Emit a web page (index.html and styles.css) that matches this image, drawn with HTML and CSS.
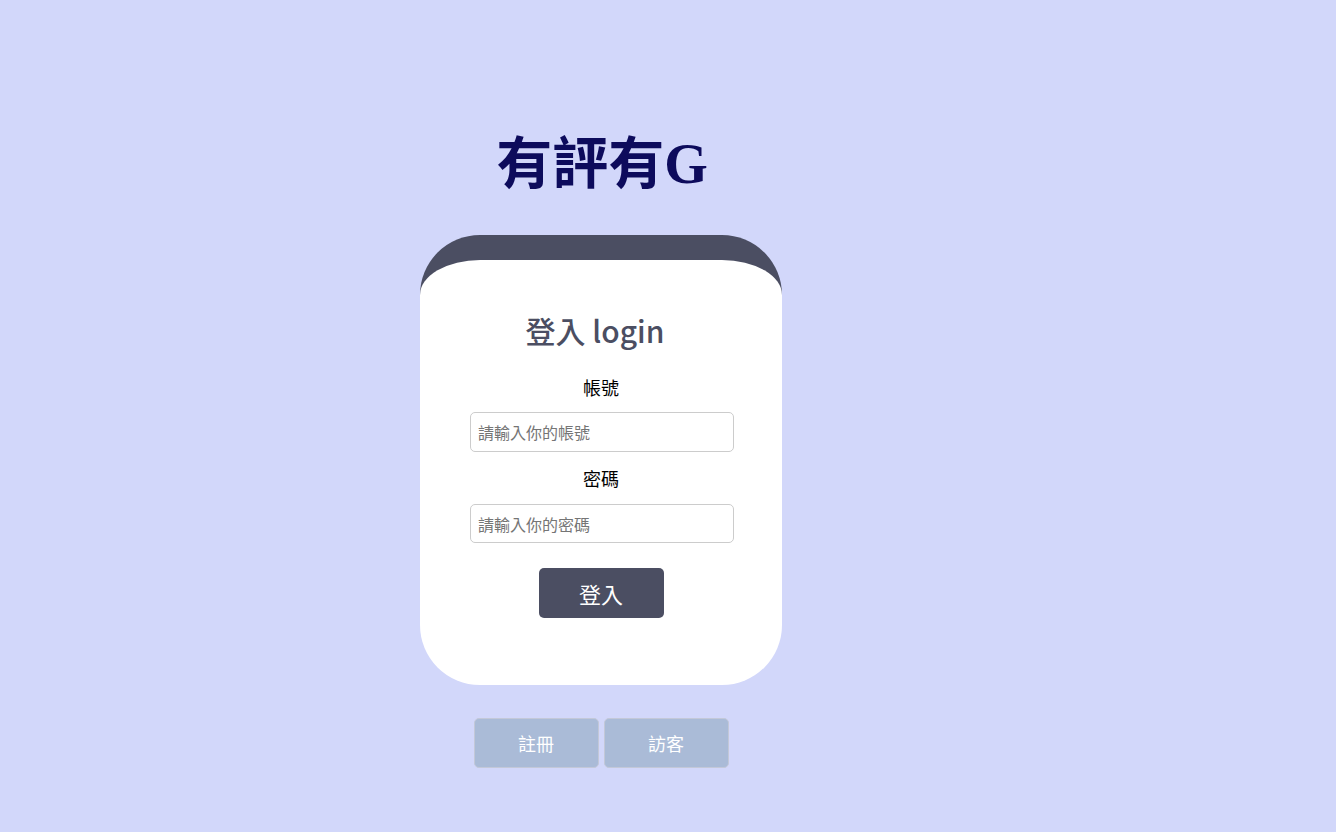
FILE: index.html
```html
<!DOCTYPE html>
<html lang="zh-Hant">
<head>
<meta charset="utf-8">
<title>有評有G</title>
<link rel="stylesheet" href="styles.css">
</head>
<body>
<div class="page">
  <h1 class="title">有評有G</h1>
  <div class="card">
    <h2 class="card-title">登入 login</h2>
    <label class="label" for="acc">帳號</label>
    <input class="field" id="acc" type="text" placeholder="請輸入你的帳號">
    <label class="label label-2" for="pwd">密碼</label>
    <input class="field" id="pwd" type="password" placeholder="請輸入你的密碼">
    <button class="login-btn" type="button">登入</button>
  </div>
  <div class="links">
    <button class="link-btn" type="button">註冊</button>
    <button class="link-btn" type="button">訪客</button>
  </div>
</div>
</body>
</html>
```

FILE: styles.css
```css
html, body {
  margin: 0;
  padding: 0;
}
body {
  background: #d2d7fa;
  min-height: 832px;
  font-family: "Noto Sans CJK TC", "Noto Sans", sans-serif;
}
.page {
  width: 362px;
  margin-left: 420px;
  padding-top: 132px;
  display: flex;
  flex-direction: column;
  align-items: center;
}
.title {
  margin: 0;
  font-family: "Liberation Serif", "Noto Sans CJK TC", serif;
  font-weight: bold;
  font-size: 56px;
  line-height: 64px;
  height: 64px;
  color: #0d0b5c;
  padding-left: 2px;
}
.card {
  margin-top: 39px;
  width: 362px;
  box-sizing: border-box;
  background: #ffffff;
  border-top: 25px solid #4b4e62;
  border-radius: 60px;
  padding: 50px 0 67px;
  display: flex;
  flex-direction: column;
  align-items: center;
}
.card-title {
  margin: 0;
  font-size: 30px;
  font-weight: 500;
  line-height: 40px;
  height: 40px;
  color: #4b4e62;
  padding-right: 12px;
}
.label {
  margin-top: 24px;
  font-size: 18px;
  line-height: 26px;
  color: #000;
}
.label-2 {
  margin-top: 13px;
}
.field {
  margin-top: 12px;
  margin-left: 2px;
  width: 264px;
  height: 40px;
  box-sizing: border-box;
  border: 1px solid #cccccc;
  border-radius: 5px;
  padding: 0 7px;
  font-family: "Noto Sans CJK TC", "Noto Sans", sans-serif;
  font-size: 16px;
  color: #333;
  background: #fff;
  outline: none;
}
.label-2 + .field {
  margin-top: 13px;
  height: 39px;
}
.field::placeholder {
  color: #757575;
}
.login-btn {
  margin-top: 25px;
  width: 125px;
  height: 50px;
  border: none;
  border-radius: 5px;
  background: #4b4e62;
  color: #ffffff;
  font-family: "Noto Sans CJK TC", "Noto Sans", sans-serif;
  font-size: 22px;
  cursor: pointer;
}
.links {
  margin-top: 33px;
  display: flex;
  gap: 5px;
}
.link-btn {
  width: 125px;
  height: 50px;
  box-sizing: border-box;
  border: 1px solid #c3c8d8;
  border-radius: 5px;
  background: #aabbd7;
  color: #ffffff;
  font-family: "Noto Sans CJK TC", "Noto Sans", sans-serif;
  font-size: 18px;
  cursor: pointer;
}
```
